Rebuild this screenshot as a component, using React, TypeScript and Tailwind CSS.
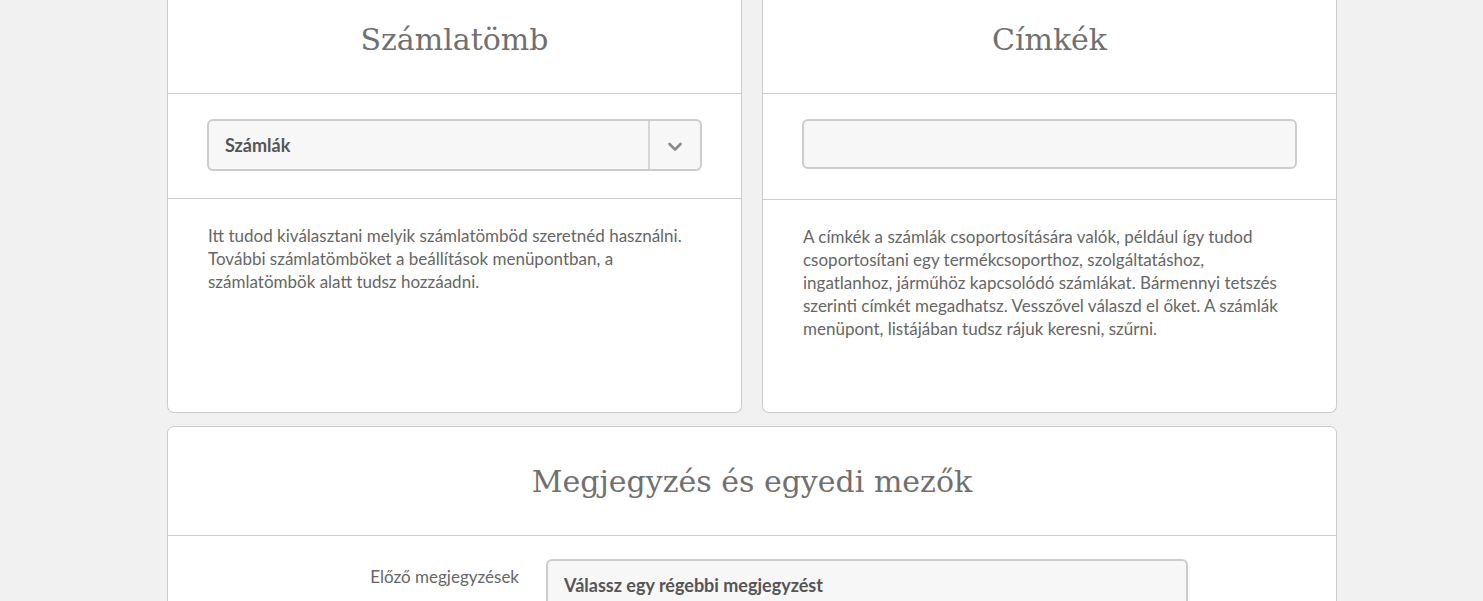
import React from "react";

const HEAD = "font-['DejaVu_Serif',serif]";
const BODY = "font-['Lato','Open_Sans',sans-serif]";

function Chevron() {
  return (
    <svg width="14" height="10" viewBox="0 0 14 10" className="text-[#8a8a8a]">
      <path d="M1.5 2 L7 7.5 L12.5 2" fill="none" stroke="currentColor" strokeWidth="2.6" strokeLinecap="round" strokeLinejoin="round" />
    </svg>
  );
}

function Card({ title, children, desc }: { title: string; children: React.ReactNode; desc: React.ReactNode }) {
  return (
    <div className="w-[575px] h-[413px] bg-white border border-t-0 border-[#cccccc] rounded-b-[7px] flex flex-col">
      <div className="h-[94px] border-b border-[#cccccc] flex items-start justify-center pt-[20px]">
        <h2 className={`${HEAD} text-[30px] leading-[40px] text-[#707070]`}>{title}</h2>
      </div>
      {children}
      <div className={`${BODY} px-[40px] pt-[25px] text-[17px] leading-[23px] text-[#666]`}>{desc}</div>
    </div>
  );
}

export default function App() {
  return (
    <div className="min-h-[601px] w-full bg-[#f1f1f1] overflow-hidden">
      <div className="w-[1170px] ml-[167px] flex flex-col gap-[13px]">
        <div className="flex gap-[20px]">
          <Card
            title="Számlatömb"
            desc={
              <p>
                Itt tudod kiválasztani melyik számlatömböd szeretnéd használni.
                <br />
                További számlatömböket a beállítások menüpontban, a
                <br />
                számlatömbök alatt tudsz hozzáadni.
              </p>
            }
          >
            <div className="h-[105px] border-b border-[#cccccc] px-[39px] pt-[25px]">
              <div className="h-[52px] rounded-[6px] border-2 border-[#cccccc] bg-[#f7f7f7] flex items-stretch">
                <div className={`${BODY} flex-1 flex items-center pl-[16px] text-[18px] font-bold text-[#555]`}>Számlák</div>
                <div className="w-[52px] border-l-2 border-[#d6d6d6] flex items-center justify-center pt-[3px]">
                  <Chevron />
                </div>
              </div>
            </div>
          </Card>
          <Card
            title="Címkék"
            desc={
              <p>
                A címkék a számlák csoportosítására valók, például így tudod
                <br />
                csoportosítani egy termékcsoporthoz, szolgáltatáshoz,
                <br />
                ingatlanhoz, járműhöz kapcsolódó számlákat. Bármennyi tetszés
                <br />
                szerinti címkét megadhatsz. Vesszővel válaszd el őket. A számlák
                <br />
                menüpont, listájában tudsz rájuk keresni, szűrni.
              </p>
            }
          >
            <div className="h-[106px] border-b border-[#cccccc] px-[39px] pt-[25px]">
              <div className="h-[50px] rounded-[6px] border-2 border-[#cccccc] bg-[#f7f7f7]" />
            </div>
          </Card>
        </div>
        <div className="w-[1170px] bg-white border border-[#cccccc] rounded-t-[7px] h-[200px]">
          <div className="h-[109px] border-b border-[#cccccc] flex items-start justify-center pt-[35px]">
            <h2 className={`${HEAD} text-[30px] leading-[40px] text-[#707070]`}>Megjegyzés és egyedi mezők</h2>
          </div>
          <div className="flex items-start pt-[23px]">
            <div className={`${BODY} w-[351px] text-right pt-[5px] text-[17px] text-[#666]`}>Előző megjegyzések</div>
            <div className="ml-[27px] w-[642px] h-[52px] rounded-[6px] border-2 border-[#cccccc] bg-[#f7f7f7] flex items-center pl-[16px]">
              <span className={`${BODY} text-[18px] font-bold text-[#555] pt-[1px]`}>Válassz egy régebbi megjegyzést</span>
            </div>
          </div>
        </div>
      </div>
    </div>
  );
}
